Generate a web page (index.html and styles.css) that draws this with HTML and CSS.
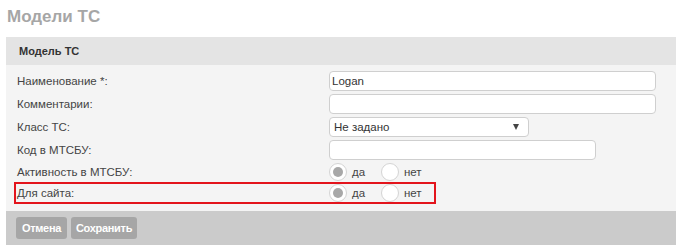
FILE: index.html
```html
<!DOCTYPE html>
<html lang="ru">
<head>
    <meta charset="UTF-8">
    <title>Модели ТС</title>
    <link rel="stylesheet" href="styles.css">
</head>
<body>
    <h1 class="page-title">Модели ТС</h1>

    <div class="panel">
        <div class="panel-head">Модель ТС</div>

        <form class="panel-body">
            <div class="row">
                <label class="row-label" for="name">Наименование *:</label>
                <input class="field field-wide" type="text" id="name" value="Logan">
            </div>
            <div class="row">
                <label class="row-label" for="comment">Комментарии:</label>
                <input class="field field-wide" type="text" id="comment">
            </div>
            <div class="row">
                <label class="row-label" for="klass">Класс ТС:</label>
                <span class="select-box">
                    <select class="field field-select" id="klass">
                        <option>Не задано</option>
                    </select>
                </span>
            </div>
            <div class="row">
                <label class="row-label" for="code">Код в МТСБУ:</label>
                <input class="field field-mid" type="text" id="code">
            </div>
            <div class="row row-radio">
                <span class="row-label">Активность в МТСБУ:</span>
                <label class="choice"><span class="dot checked"></span>да</label>
                <label class="choice"><span class="dot"></span>нет</label>
            </div>
            <div class="row row-radio row-marked">
                <span class="row-label">Для сайта:</span>
                <label class="choice"><span class="dot checked"></span>да</label>
                <label class="choice"><span class="dot"></span>нет</label>
            </div>
        </form>

        <div class="panel-foot">
            <button type="button" class="btn btn-cancel">Отмена</button>
            <button type="button" class="btn btn-save">Сохранить</button>
        </div>
    </div>
</body>
</html>
```

FILE: styles.css
```css
body {
    margin: 0;
    background-color: #fff;
    font-family: 'Liberation Sans', Arial, sans-serif;
    font-size: 11.5px;
    color: #333;
}
.page-title {
    margin: 0;
    padding: 6px 7px 0;
    font-size: 17px;
    line-height: 21px;
    font-weight: bold;
    color: #a6a6a6;
}
.panel {
    margin: 10px 0 0 6px;
}
.panel-head {
    height: 28px;
    line-height: 28px;
    padding-left: 13px;
    background-color: #e4e4e4;
    font-size: 11px;
    font-weight: bold;
    color: #333;
}
.panel-body {
    margin: 0;
    padding: 6px 0 9px 10px;
    background-color: #f4f4f4;
    display: flex;
    flex-direction: column;
    gap: 3px;
}
.row {
    display: flex;
    align-items: center;
    height: 20px;
}
.row-radio {
    height: 18px;
}
.row-marked {
    width: 418px;
    outline: 2px solid #e3141c;
}
.row-label {
    width: 312px;
    padding-left: 1px;
    color: #444;
}
.field {
    box-sizing: border-box;
    height: 20px;
    margin: 0;
    padding: 0 2px;
    border: 1px solid #cfcfcf;
    border-radius: 4px;
    background-color: #fff;
    font-family: 'Liberation Sans', Arial, sans-serif;
    font-size: 11.5px;
    color: #333;
}
.field-wide {
    width: 327px;
}
.field-mid {
    width: 267px;
}
.select-box {
    position: relative;
    display: inline-block;
}
.select-box::after {
    content: "";
    position: absolute;
    right: 10px;
    top: 7px;
    border-left: 3px solid transparent;
    border-right: 3px solid transparent;
    border-top: 6px solid #444;
    pointer-events: none;
}
.field-select {
    -webkit-appearance: none;
    appearance: none;
    width: 200px;
    padding: 0 4px;
}
.choice {
    display: flex;
    align-items: center;
    width: 52px;
    color: #444;
}
.dot {
    box-sizing: border-box;
    width: 18px;
    height: 18px;
    margin-right: 5px;
    border: 1px solid #d4d4d4;
    border-radius: 50%;
    background-color: #fff;
    display: flex;
    align-items: center;
    justify-content: center;
}
.dot.checked::before {
    content: "";
    width: 10px;
    height: 10px;
    border-radius: 50%;
    background-color: #a8a8a8;
}
.panel-foot {
    display: flex;
    gap: 4px;
    padding: 6px 10px 8px;
    background-color: #cbcbcb;
}
.btn {
    height: 22px;
    padding: 0;
    border: none;
    border-radius: 3px;
    background-color: #a6a6a6;
    color: #fff;
    font-family: 'Liberation Sans', Arial, sans-serif;
    font-size: 11px;
    font-weight: bold;
    letter-spacing: -0.3px;
    cursor: pointer;
}
.btn-cancel {
    width: 51px;
}
.btn-save {
    width: 66px;
}
```
